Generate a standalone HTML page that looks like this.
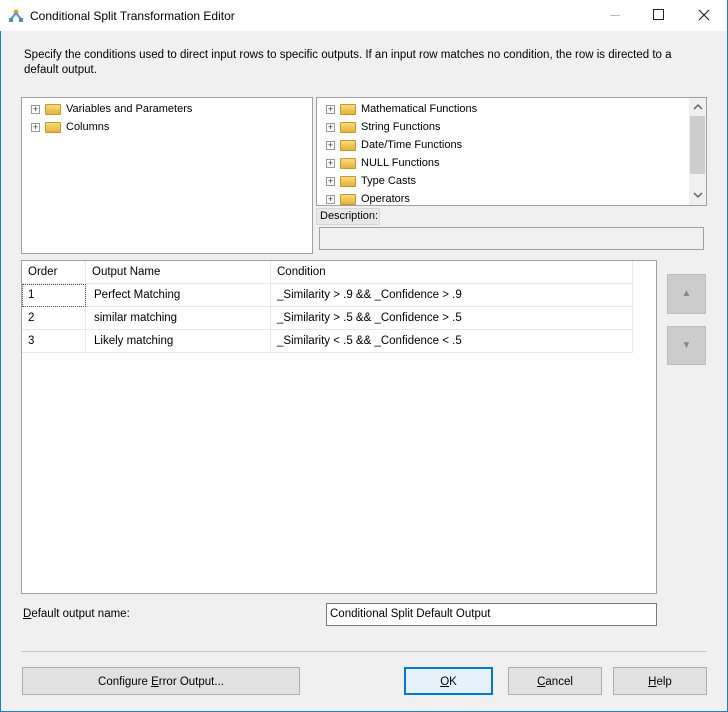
<!DOCTYPE html>
<html><head><style>
*{box-sizing:border-box;margin:0;padding:0}
body{width:728px;height:712px;overflow:hidden;font-family:"Liberation Sans",sans-serif;font-size:11.5px;color:#000;background:#f0f0f0}
.win{position:absolute;left:0;top:0;width:728px;height:712px;border:1px solid #1a7fd4;background:#f0f0f0}
.a{position:absolute}
.title{left:-1px;top:-1px;width:727px;height:31px;background:#fff}
.box{background:#fff;border:1px solid #a0a0a0}
.tree div{height:18px;line-height:18px;position:relative;padding-left:44px;font-size:11px}
.pl{position:absolute;left:9px;top:5px;width:9px;height:9px;border:1px solid #999;font-size:9px;line-height:7px;text-align:center;color:#333;background:#fff}
.fd{position:absolute;left:23px;top:4px;width:16px;height:11px;background:linear-gradient(#f8da7c,#e4b43a);border:1px solid #c8992a;border-radius:1px}
.btn{background:#e1e1e1;border:1px solid #adadad;text-align:center;line-height:28px}
.cell{position:absolute;line-height:22px;padding-left:6px;border-right:1px solid #e8e8e8;border-bottom:1px solid #e8e8e8}
</style></head><body><div class="win">
<div class="a title">
<svg class="a" style="left:9px;top:9px" width="14" height="13"><circle cx="7" cy="3" r="2.5" fill="#e8a020"/><path d="M7 4L2 10M7 4L12 10" stroke="#4a90d0" stroke-width="2"/><rect x="0" y="9" width="4" height="4" fill="#4a90d0"/><rect x="10" y="9" width="4" height="4" fill="#4a90d0"/></svg>
<div class="a" style="left:30px;top:9px;font-size:12px">Conditional Split Transformation Editor</div>
<div class="a" style="left:610px;top:15px;width:10px;height:1px;background:#bbb"></div>
<div class="a" style="left:653px;top:9px;width:11px;height:11px;border:1px solid #222"></div>
<svg class="a" style="left:698px;top:9px" width="12" height="12"><path d="M1 1L11 11M11 1L1 11" stroke="#222" stroke-width="1.2"/></svg>
</div>
<div class="a" style="left:23px;top:47px;line-height:15px;width:682px">Specify the conditions used to direct input rows to specific outputs. If an input row matches no condition, the row is directed to a default output.</div>
<div class="a box tree" style="left:20px;top:96px;width:292px;height:157px;padding-top:2px">
<div><span class="pl">+</span><span class="fd"></span>Variables and Parameters</div>
<div><span class="pl">+</span><span class="fd"></span>Columns</div>
</div>
<div class="a box tree" style="left:315px;top:96px;width:391px;height:109px;padding-top:2px;overflow:hidden">
<div><span class="pl">+</span><span class="fd"></span>Mathematical Functions</div>
<div><span class="pl">+</span><span class="fd"></span>String Functions</div>
<div><span class="pl">+</span><span class="fd"></span>Date/Time Functions</div>
<div><span class="pl">+</span><span class="fd"></span>NULL Functions</div>
<div><span class="pl">+</span><span class="fd"></span>Type Casts</div>
<div><span class="pl">+</span><span class="fd"></span>Operators</div>
<div style="position:absolute;left:372px;top:0;width:17px;height:107px;background:#f0f0f0;padding:0"></div>
<div style="position:absolute;left:373px;top:18px;width:15px;height:58px;background:#cdcdcd;padding:0"></div>
<svg style="position:absolute;left:376px;top:6px" width="10" height="6"><path d="M1 5L5 1L9 5" fill="none" stroke="#555" stroke-width="1.3"/></svg>
<svg style="position:absolute;left:376px;top:94px" width="10" height="6"><path d="M1 1L5 5L9 1" fill="none" stroke="#555" stroke-width="1.3"/></svg>
</div>
<div class="a" style="left:315px;top:207px;width:64px;height:17px;background:#e8e8e8;border:1px solid #d8d8d8;padding-left:3px;line-height:15px;font-size:11px">Description:</div>
<div class="a" style="left:318px;top:226px;width:385px;height:23px;border:1px solid #a0a0a0;background:#f0f0f0"></div>
<div class="a box" style="left:20px;top:259px;width:636px;height:334px">
<div class="cell" style="left:0;top:0;width:64px;height:23px;background:#fff">Order</div>
<div class="cell" style="left:64px;top:0;width:185px;height:23px">Output Name</div>
<div class="cell" style="left:249px;top:0;width:362px;height:23px">Condition</div>
<div class="cell" style="left:0;top:23px;width:64px;height:23px;outline:1px dotted #555;outline-offset:-1px">1</div>
<div class="cell" style="left:64px;top:23px;width:185px;height:23px;padding-left:8px">Perfect Matching</div>
<div class="cell" style="left:249px;top:23px;width:362px;height:23px">_Similarity &gt; .9 &amp;&amp; _Confidence &gt; .9</div>
<div class="cell" style="left:0;top:46px;width:64px;height:23px">2</div>
<div class="cell" style="left:64px;top:46px;width:185px;height:23px;padding-left:8px">similar matching</div>
<div class="cell" style="left:249px;top:46px;width:362px;height:23px">_Similarity &gt; .5 &amp;&amp; _Confidence &gt; .5</div>
<div class="cell" style="left:0;top:69px;width:64px;height:23px">3</div>
<div class="cell" style="left:64px;top:69px;width:185px;height:23px;padding-left:8px">Likely matching</div>
<div class="cell" style="left:249px;top:69px;width:362px;height:23px">_Similarity &lt; .5 &amp;&amp; _Confidence &lt; .5</div>
</div>
<div class="a" style="left:666px;top:273px;width:39px;height:40px;background:#cccccc;border:1px solid #bdbdbd;text-align:center;line-height:38px;color:#888;font-size:10px">▲</div>
<div class="a" style="left:666px;top:325px;width:39px;height:39px;background:#cccccc;border:1px solid #bdbdbd;text-align:center;line-height:37px;color:#888;font-size:10px">▼</div>
<div class="a" style="left:22px;top:607px"><u>D</u>efault output name:</div>
<div class="a" style="left:325px;top:602px;width:331px;height:23px;background:#fff;border:1px solid #7a7a7a;padding-left:3px;line-height:21px">Conditional Split Default Output</div>
<div class="a" style="left:20px;top:650px;width:686px;height:1px;background:#c8c8c8"></div>
<div class="a btn" style="left:21px;top:666px;width:278px;height:28px">Configure <u>E</u>rror Output...</div>
<div class="a btn" style="left:403px;top:666px;width:89px;height:28px;border:2px solid #0078d7;background:#e5f1fb;line-height:26px"><u>O</u>K</div>
<div class="a btn" style="left:507px;top:666px;width:94px;height:28px"><u>C</u>ancel</div>
<div class="a btn" style="left:612px;top:666px;width:94px;height:28px"><u>H</u>elp</div>
</div></body></html>
